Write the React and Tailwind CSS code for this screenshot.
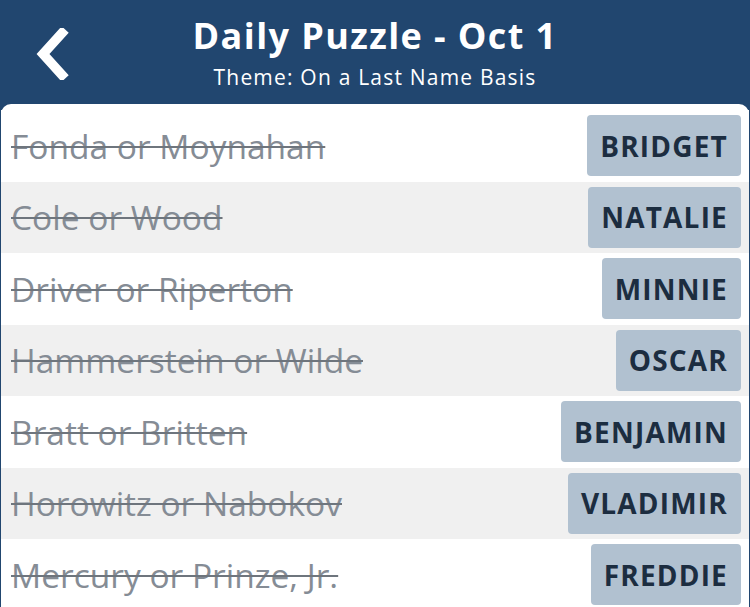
import React from 'react'

const clues = [
  { clue: 'Fonda or Moynahan', answer: 'BRIDGET' },
  { clue: 'Cole or Wood', answer: 'NATALIE' },
  { clue: 'Driver or Riperton', answer: 'MINNIE' },
  { clue: 'Hammerstein or Wilde', answer: 'OSCAR' },
  { clue: 'Bratt or Britten', answer: 'BENJAMIN' },
  { clue: 'Horowitz or Nabokov', answer: 'VLADIMIR' },
  { clue: 'Mercury or Prinze, Jr.', answer: 'FREDDIE' }
]

export default function App() {
  return (
    <div className="w-[750px] h-[607px] overflow-hidden bg-[#21466f] font-['Open_Sans',sans-serif]">
      {/* Header */}
      <div className="relative h-[104px] flex flex-col items-center text-white">
        <svg className="absolute left-[33px] top-[28px]" width="38" height="52" viewBox="0 0 38 52">
          <path d="M29 5 L10 26 L29 47" fill="none" stroke="white" strokeWidth="9.5" strokeLinecap="square" strokeLinejoin="miter" />
        </svg>
        <h1 className="mt-[11px] text-[36px] font-bold leading-[50px] tracking-[1.4px]">Daily Puzzle - Oct 1</h1>
        <p className="mt-[1px] text-[21px] leading-[30px] tracking-[1.2px]">Theme: On a Last Name Basis</p>
      </div>

      {/* List */}
      <div className="bg-white rounded-t-[10px] mx-[1px] pt-[6px]">
        {clues.map((item, index) => (
          <div
            key={index}
            className={`flex items-center justify-between h-[71.5px] pl-[10px] pr-[8px] ${index % 2 === 1 ? 'bg-[#f0f0f0]' : 'bg-white'}`}
          >
            <span className="text-[33.5px] text-[#858c95] line-through decoration-[2px] decoration-[#6e757d]">
              {item.clue}
            </span>
            <span className="h-[61px] flex items-center px-[13px] rounded-[4px] bg-[#b1c1d0] text-[#1c2d40] text-[28px] font-bold tracking-[1.2px]">
              {item.answer}
            </span>
          </div>
        ))}
      </div>
    </div>
  )
}
